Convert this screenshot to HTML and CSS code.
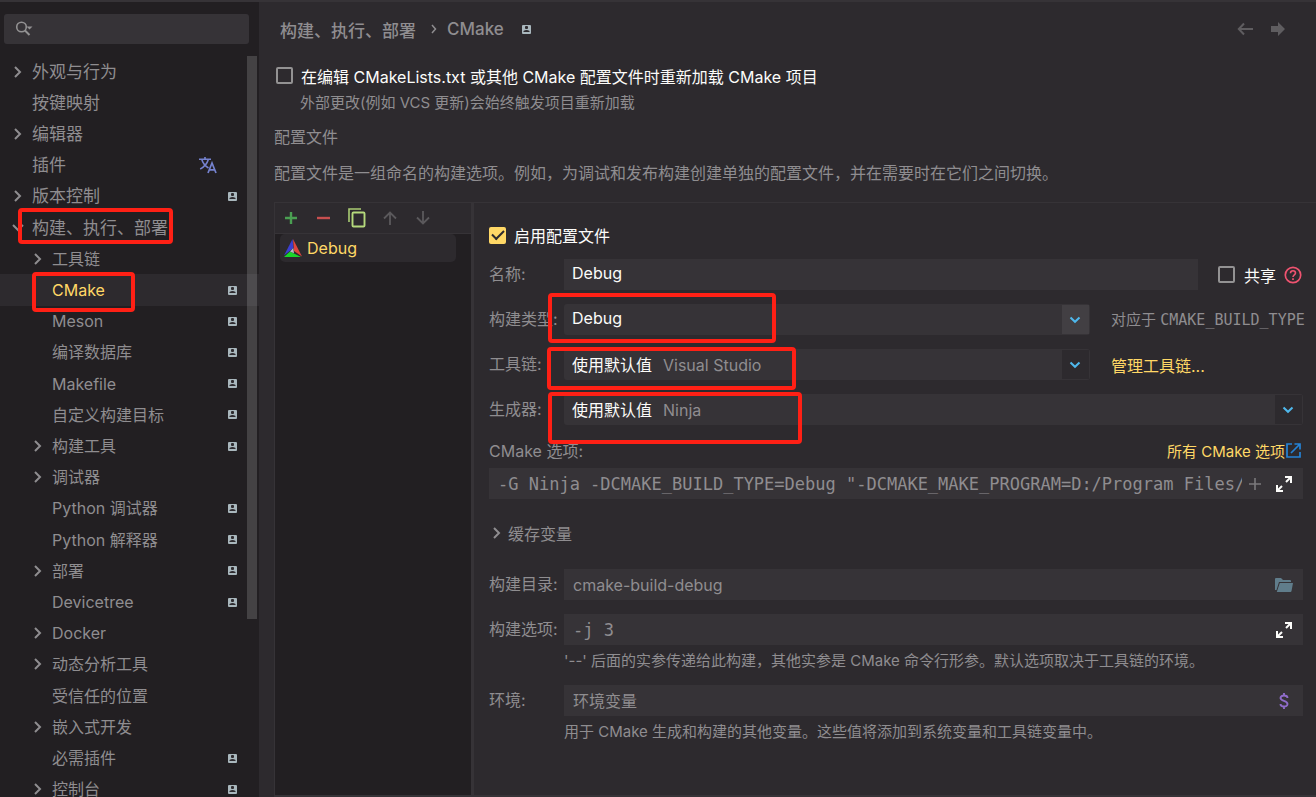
FILE: index.html
```html
<!DOCTYPE html>
<html lang="zh-CN">
<head>
<meta charset="utf-8">
<title>设置 - CMake</title>
<link rel="stylesheet" href="styles.css">
</head>
<body>
<svg class="defs" aria-hidden="true">
  <symbol id="chevron" viewBox="0 0 10 14"><path d="M2 2l5 5-5 5" fill="none" stroke="currentColor" stroke-width="2"/></symbol>
  <symbol id="badge" viewBox="0 0 9 9"><rect width="9" height="9" rx="1" fill="#a9b7bd"/><rect x="3" y="1" width="3" height="3" rx="1" fill="#2d2a2e"/><path d="M1.500 7V5.900Q4.500 4.300 7.500 5.900V7z" fill="#2d2a2e"/></symbol>
  <symbol id="drop" viewBox="0 0 12 8"><path d="M1.500 1.500L6 5.800l4.500-4.300" fill="none" stroke="#4fb8ec" stroke-width="2"/></symbol>
  <symbol id="expand" viewBox="0 0 16 16"><path d="M9 1h6v6M15 1l-5 5M1 9v6h6M1 15l5-5" fill="none" stroke="#fcfcfa" stroke-width="2"/></symbol>
</svg>
<div class="window">
  <aside class="sidebar">
    <div class="search">
      <svg width="18" height="16" viewBox="0 0 18 16"><circle cx="6.500" cy="6" r="4.800" fill="none" stroke="#939293" stroke-width="1.600"/><path d="M10 9.500l4.500 4.500" stroke="#939293" stroke-width="2"/><path d="M11.500 5.500h6l-3 3z" fill="#939293"/></svg>
      <input type="search" aria-label="搜索设置">
    </div>
    <nav class="tree-pane" aria-label="设置">
      <ul class="tree">
        <li class="top"><svg class="arrow"><use href="#chevron"/></svg><span class="name">外观与行为</span></li>
        <li class="top"><span class="arrow"></span><span class="name">按键映射</span></li>
        <li class="top"><svg class="arrow"><use href="#chevron"/></svg><span class="name">编辑器</span></li>
        <li class="top"><span class="arrow"></span><span class="name">插件</span><svg class="translate" viewBox="0 0 18 18"><path d="M0 3.200h12M6 1v2M2.800 3.500C4 7.500 7 10.500 9.500 12M9.300 3.500C8 8 5 11 1.200 13" fill="none" stroke="#7582cf" stroke-width="1.600"/><path d="M9 17l4-10 4 10M10.500 13.800h5" fill="none" stroke="#7582cf" stroke-width="1.700"/></svg></li>
        <li class="top"><svg class="arrow"><use href="#chevron"/></svg><span class="name">版本控制</span><svg class="badge"><use href="#badge"/></svg></li>
        <li class="top"><svg class="arrow open"><use href="#chevron"/></svg><span class="name">构建、执行、部署</span><span class="mark mark-section"></span></li>
        <li><svg class="arrow"><use href="#chevron"/></svg><span class="name">工具链</span></li>
        <li class="selected"><span class="arrow"></span><span class="name">CMake</span><svg class="badge"><use href="#badge"/></svg><span class="mark mark-page"></span></li>
        <li><span class="arrow"></span><span class="name">Meson</span><svg class="badge"><use href="#badge"/></svg></li>
        <li><span class="arrow"></span><span class="name">编译数据库</span><svg class="badge"><use href="#badge"/></svg></li>
        <li><span class="arrow"></span><span class="name">Makefile</span><svg class="badge"><use href="#badge"/></svg></li>
        <li><span class="arrow"></span><span class="name">自定义构建目标</span><svg class="badge"><use href="#badge"/></svg></li>
        <li><svg class="arrow"><use href="#chevron"/></svg><span class="name">构建工具</span><svg class="badge"><use href="#badge"/></svg></li>
        <li><svg class="arrow"><use href="#chevron"/></svg><span class="name">调试器</span></li>
        <li><span class="arrow"></span><span class="name">Python 调试器</span><svg class="badge"><use href="#badge"/></svg></li>
        <li><span class="arrow"></span><span class="name">Python 解释器</span><svg class="badge"><use href="#badge"/></svg></li>
        <li><svg class="arrow"><use href="#chevron"/></svg><span class="name">部署</span><svg class="badge"><use href="#badge"/></svg></li>
        <li><span class="arrow"></span><span class="name">Devicetree</span><svg class="badge"><use href="#badge"/></svg></li>
        <li><svg class="arrow"><use href="#chevron"/></svg><span class="name">Docker</span></li>
        <li><svg class="arrow"><use href="#chevron"/></svg><span class="name">动态分析工具</span></li>
        <li><span class="arrow"></span><span class="name">受信任的位置</span></li>
        <li><svg class="arrow"><use href="#chevron"/></svg><span class="name">嵌入式开发</span></li>
        <li><span class="arrow"></span><span class="name">必需插件</span><svg class="badge"><use href="#badge"/></svg></li>
        <li><svg class="arrow"><use href="#chevron"/></svg><span class="name">控制台</span><svg class="badge"><use href="#badge"/></svg></li>
      </ul>
      <div class="scrollbar"></div>
    </nav>
  </aside>

  <main class="page">
    <header class="crumbs">
      <span>构建、执行、部署</span>
      <svg class="crumb-sep" viewBox="0 0 6 10"><path d="M1 1l3.500 4L1 9" fill="none" stroke="currentColor" stroke-width="1.500"/></svg>
      <span>CMake</span>
      <svg class="badge crumb-badge"><use href="#badge"/></svg>
      <div class="history">
        <button type="button" aria-label="后退"><svg width="16" height="14" viewBox="0 0 16 14"><path d="M7 1.500L1.800 7 7 12.500M2 7h14" fill="none" stroke="#5f5d60" stroke-width="2"/></svg></button>
        <button type="button" aria-label="前进"><svg width="14" height="14" viewBox="0 0 14 14"><path d="M0 4h7V0l7 7-7 7v-4H0z" fill="#5f5d60"/></svg></button>
      </div>
    </header>

    <label class="check reload"><input type="checkbox">在编辑 CMakeLists.txt 或其他 CMake 配置文件时重新加载 CMake 项目</label>
    <p class="note reload-note">外部更改(例如 VCS 更新)会始终触发项目重新加载</p>
    <p class="section-title">配置文件</p>
    <p class="section-text">配置文件是一组命名的构建选项。例如，为调试和发布构建创建单独的配置文件，并在需要时在它们之间切换。</p>

    <div class="split">
      <section class="profiles">
        <div class="toolbar">
          <button type="button" aria-label="添加"><svg width="14" height="14" viewBox="0 0 14 14"><path d="M7 1v12M1 7h12" stroke="#4a9f52" stroke-width="2.400"/></svg></button>
          <button type="button" aria-label="移除"><svg width="14" height="14" viewBox="0 0 14 14"><path d="M0 7h13" stroke="#c74f4f" stroke-width="2.400"/></svg></button>
          <button type="button" aria-label="复制"><svg width="18" height="20" viewBox="0 0 18 20"><path d="M1 14V1h12" fill="none" stroke="#a9cc73" stroke-width="1.600"/><rect x="4.500" y="4.500" width="12" height="14" rx="1" fill="none" stroke="#b5d97c" stroke-width="1.900"/></svg></button>
          <button type="button" aria-label="上移"><svg width="14" height="14" viewBox="0 0 14 14"><path d="M7 14V1.500M1 7.500l6-6 6 6" fill="none" stroke="#5b595c" stroke-width="1.800"/></svg></button>
          <button type="button" aria-label="下移"><svg width="14" height="14" viewBox="0 0 14 14"><path d="M7 0v12.500M1 6.500l6 6 6-6" fill="none" stroke="#5b595c" stroke-width="1.800"/></svg></button>
        </div>
        <ul class="profile-list">
          <li><svg width="18" height="18" viewBox="0 0 18 18"><path d="M8.500 0L0 16.500 9.500 9z" fill="#3b3fd0"/><path d="M9 0l1 12 8 5.500z" fill="#e0443e"/><path d="M0 18l6-5.500L17 18z" fill="#18d42a"/><path d="M6 12.500L9.300 9l.7 5.300z" fill="#b9b9c4"/></svg>Debug</li>
        </ul>
      </section>

      <form class="form">
        <label class="check enable"><input type="checkbox" checked>启用配置文件</label>

        <div class="row">
          <label class="caption" for="name">名称:</label>
          <input class="field grow" id="name" type="text" value="Debug">
          <label class="check share"><input type="checkbox">共享</label>
          <button class="help" type="button" aria-label="帮助"><svg width="18" height="18" viewBox="0 0 18 18"><circle cx="9" cy="9" r="7.700" fill="none" stroke="#ef5370" stroke-width="1.700"/><path d="M6.500 7.200C6.500 3.800 11.500 4 11.500 7c0 1.700-2.500 2-2.500 4" fill="none" stroke="#ef5370" stroke-width="1.600"/><path d="M9 12.200v1.800" stroke="#ef5370" stroke-width="1.700"/></svg></button>
        </div>

        <div class="row">
          <label class="caption" for="type">构建类型:</label>
          <div class="combo grow">
            <select class="plain" id="type"><option>Debug</option><option>Release</option></select>
            <span class="drop lit"><svg width="12" height="8"><use href="#drop"/></svg></span>
          </div>
          <span class="side note">对应于 <code>CMAKE_BUILD_TYPE</code></span>
          <span class="mark mark-type"></span>
        </div>

        <div class="row">
          <label class="caption" for="toolchain">工具链:</label>
          <div class="combo grow">
            <select id="toolchain"><option>使用默认值</option></select>
            <span class="suffix">Visual Studio</span>
            <span class="drop"><svg width="12" height="8"><use href="#drop"/></svg></span>
          </div>
          <span class="side"><a href="#">管理工具链...</a></span>
          <span class="mark mark-toolchain"></span>
        </div>

        <div class="row">
          <label class="caption" for="generator">生成器:</label>
          <div class="combo grow">
            <select id="generator"><option>使用默认值</option></select>
            <span class="suffix">Ninja</span>
            <span class="drop"><svg width="12" height="8"><use href="#drop"/></svg></span>
          </div>
          <span class="mark mark-generator"></span>
        </div>

        <div class="options">
          <div class="options-head">
            <label for="options">CMake 选项:</label>
            <a class="small-link" href="#">所有 CMake 选项<svg width="15" height="15" viewBox="0 0 15 15"><path d="M6 1H1v13h13V9M8.500 1H14v5.500M14 1L5 10" fill="none" stroke="#2583d6" stroke-width="1.700"/></svg></a>
          </div>
          <div class="box wide">
            <input class="mono" id="options" type="text" value='-G Ninja -DCMAKE_BUILD_TYPE=Debug "-DCMAKE_MAKE_PROGRAM=D:/Program Files/JetBrains/CLion/bin/ninja/win/x64/ninja.exe"'>
            <button type="button" aria-label="插入"><svg width="12" height="12" viewBox="0 0 12 12"><path d="M6 0v12M0 6h12" stroke="#7b797c" stroke-width="1.600"/></svg></button>
            <button type="button" aria-label="展开"><svg width="16" height="16"><use href="#expand"/></svg></button>
          </div>
        </div>

        <button class="cache" type="button"><svg class="arrow"><use href="#chevron"/></svg>缓存变量</button>

        <div class="row">
          <label class="caption" for="dir">构建目录:</label>
          <div class="box grow">
            <input id="dir" type="text" placeholder="cmake-build-debug">
            <button type="button" aria-label="浏览"><svg width="18" height="14" viewBox="0 0 18 14"><path d="M0 12V1q0-1 1-1h5l2 2h7q1 0 1 1v1H4L1.500 12z" fill="#607d8b"/><path d="M4.800 5H18l-1.500 8q-.2 1-1 1H1.800z" fill="#607d8b"/></svg></button>
          </div>
        </div>

        <div>
          <div class="row">
            <label class="caption" for="build">构建选项:</label>
            <div class="box grow">
              <input class="mono" id="build" type="text" placeholder="-j 3">
              <button type="button" aria-label="展开"><svg width="16" height="16"><use href="#expand"/></svg></button>
            </div>
          </div>
          <p class="note hint">'--' 后面的实参传递给此构建，其他实参是 CMake 命令行形参。默认选项取决于工具链的环境。</p>
        </div>

        <div>
          <div class="row">
            <label class="caption" for="env">环境:</label>
            <div class="box grow">
              <input id="env" type="text" placeholder="环境变量">
              <button type="button" aria-label="编辑变量"><svg width="10" height="16" viewBox="0 0 10 16"><path d="M8.500 5C8.500 1.700 1.500 1.700 1.500 5S8.500 7.500 8.500 11 1.500 14.300 1.500 11M5 0v3M5 13v3" fill="none" stroke="#8f6cc9" stroke-width="1.900"/></svg></button>
            </div>
          </div>
          <p class="note hint">用于 CMake 生成和构建的其他变量。这些值将添加到系统变量和工具链变量中。</p>
        </div>
      </form>
    </div>
  </main>
</div>
</body>
</html>
```
FILE: styles.css
```css
:root {
  --bg: #2d2a2e;
  --dark: #221f22;
  --raised: #363337;
  --text: #8f8d90;
  --bright: #fcfcfa;
  --accent: #ffd866;
  --mark: #ff2015;
}

* { box-sizing: border-box; }

body, ul, p { margin: 0; padding: 0; }
ul { list-style: none; }

body, input, select, button {
  font-family: Inter, "Noto Sans CJK SC", sans-serif;
  font-size: 16px;
  color: var(--text);
}

button, input, select {
  margin: 0;
  padding: 0;
  border: 0;
  outline: 0;
  background: none;
}

button {
  display: flex;
  align-items: center;
  justify-content: center;
}

svg { display: block; flex: none; }
a { color: var(--accent); text-decoration: none; }
.defs { position: absolute; width: 0; height: 0; }

.window {
  display: flex;
  height: 100vh;
  overflow: hidden;
  background: var(--bg);
  border-top: 2px solid var(--raised);
}

/* Sidebar */
.sidebar {
  flex: none;
  width: 259px;
  display: flex;
  flex-direction: column;
  background: var(--dark);
}

.search {
  display: flex;
  align-items: center;
  height: 30px;
  margin: 12px 10px 12px 4px;
  padding-left: 11px;
  border-radius: 3px;
  background: var(--raised);
}
.search input { flex: 1; min-width: 0; margin-left: 4px; }

.tree-pane {
  position: relative;
  flex: 1;
  min-height: 0;
  display: flex;
}

.tree {
  flex: 1;
  display: flex;
  flex-direction: column;
  margin-bottom: -8px;
}

.tree li {
  position: relative;
  flex: 1;
  min-height: 0;
  display: flex;
  align-items: center;
  padding: 0 22px 0 33px;
  line-height: 24px;
}
.tree .top { padding-left: 13px; font-size: 17px; }
.tree .selected { background: var(--bg); color: var(--accent); }

.arrow { width: 10px; height: 14px; margin-right: 9px; flex: none; }
.arrow.open { transform: rotate(90deg); }
.name { flex: 1; white-space: nowrap; }
.badge { width: 9px; height: 9px; }
.translate { width: 18px; height: 18px; margin-right: 20px; }

.scrollbar {
  position: absolute;
  top: 0;
  right: 2px;
  width: 10px;
  height: 76%;
  background: #ffffff28;
}

/* Red highlight frames */
.mark {
  position: absolute;
  z-index: 2;
  border: 4px solid var(--mark);
  border-radius: 4px;
  pointer-events: none;
}
.mark-section { left: 18px; top: -4px; width: 155px; height: 36px; }
.mark-page { left: 32px; top: -2px; width: 103px; height: 40px; }
.mark-type { left: 59px; top: -11px; width: 228px; height: 50px; }
.mark-toolchain { left: 58px; top: -2px; width: 249px; height: 43px; }
.mark-generator { left: 59px; top: -2px; width: 254px; height: 52px; }

/* Page */
.page {
  flex: 1;
  min-width: 0;
  display: flex;
  flex-direction: column;
  padding-left: 15px;
}

.crumbs {
  display: flex;
  align-items: center;
  height: 56px;
  padding: 0 31px 2px 6px;
  font-size: 17px;
  font-weight: 500;
}
.crumb-sep { width: 6px; height: 10px; margin: 0 10px 0 15px; }
.crumb-badge { margin-left: 18px; }
.history { display: flex; gap: 18px; margin-left: auto; }

.check {
  display: flex;
  align-items: center;
  color: var(--bright);
  white-space: nowrap;
}
.check input {
  appearance: none;
  flex: none;
  display: grid;
  place-items: center;
  width: 17px;
  height: 17px;
  margin-right: 8px;
  border: 2px solid #939293;
  border-radius: 2px;
}
.check input:checked { border-color: var(--accent); background: var(--accent); }
.check input:checked::after {
  content: "";
  width: 10px;
  height: 5px;
  margin-bottom: 3px;
  border: solid var(--bg);
  border-width: 0 0 2px 2px;
  transform: rotate(-45deg);
}

.note { font-size: 15px; line-height: 20px; }
.reload { height: 35px; padding-left: 2px; }
.reload-note { padding-left: 26px; }
.section-title { margin-top: 12px; line-height: 24px; }
.section-text { margin-top: 12px; line-height: 24px; white-space: nowrap; }

.split {
  flex: 1;
  min-height: 0;
  display: flex;
  margin-top: 17px;
  border-top: 1px solid var(--raised);
  border-bottom: 2px solid var(--raised);
}

.profiles {
  flex: none;
  width: 200px;
  display: flex;
  flex-direction: column;
  border-left: 1px solid var(--raised);
  border-right: 3px solid var(--raised);
}
.toolbar {
  display: flex;
  gap: 1px;
  height: 31px;
  border-bottom: 1px solid var(--raised);
}
.toolbar button { width: 32px; }
.profile-list { flex: 1; padding-left: 5px; background: var(--dark); }
.profile-list li {
  display: flex;
  align-items: center;
  gap: 5px;
  width: 176px;
  height: 28px;
  padding-left: 4px;
  border-radius: 5px;
  background: var(--bg);
  color: var(--accent);
}

/* Form */
.form {
  flex: 1;
  min-width: 0;
  display: flex;
  flex-direction: column;
  gap: 14px;
  padding: 22px 13px 0 15px;
}

.enable { height: 20px; }
.row { position: relative; display: flex; align-items: center; height: 31px; }
.caption { flex: none; width: 75px; padding-bottom: 3px; white-space: nowrap; }
.grow { flex: 1; min-width: 0; }

.field { height: 31px; padding: 0 0 3px 8px; background: var(--raised); color: var(--bright); }
.share { margin-left: 20px; }
.share input { margin-right: 9px; }
.help { margin: 0 1px 0 8px; }

.combo {
  display: grid;
  grid-template-columns: 1fr 27px;
  height: 31px;
  padding: 1px;
  border-radius: 3px;
  background: var(--raised);
}
.combo > * { grid-row: 1; }
.combo select {
  grid-column: 1 / 3;
  appearance: none;
  padding-left: 7px;
  color: var(--bright);
}
.combo .plain { padding-bottom: 3px; }
.suffix {
  grid-column: 1;
  align-self: center;
  padding-left: 98px;
  pointer-events: none;
}
.drop {
  grid-column: 2;
  display: grid;
  place-items: center;
  padding-right: 2px;
  background: var(--bg);
  pointer-events: none;
}
.drop.lit { background: #423f43; }

.side { flex: none; width: 192px; margin-left: 21px; white-space: nowrap; }
code { font-family: "DejaVu Sans Mono", monospace; font-size: 15px; }

.options { display: flex; flex-direction: column; gap: 7px; }
.options-head { display: flex; justify-content: space-between; align-items: center; height: 22px; }
.small-link { display: flex; align-items: center; gap: 1px; padding-right: 2px; font-size: 15px; }

.box { display: flex; align-items: center; height: 31px; padding-right: 10px; background: var(--raised); }
.box input { flex: 1; min-width: 0; margin-left: 9px; }
.box input::placeholder { color: var(--text); opacity: 1; }
.box button { width: 18px; margin-left: 11px; }
.wide button:first-of-type { margin-left: 4px; }
.box .mono { font-family: "DejaVu Sans Mono", monospace; font-size: 17px; }

.cache { justify-content: flex-start; height: 42px; padding: 0 0 3px 3px; }
.cache .arrow { margin-right: 6px; }
.hint { padding: 6px 0 0 75px; white-space: nowrap; }
```
